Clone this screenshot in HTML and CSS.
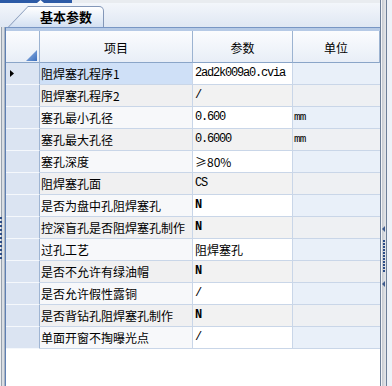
FILE: index.html
```html
<!DOCTYPE html>
<html lang="zh">
<head>
  <meta charset="UTF-8" />
  <title>基本参数</title>
  <link rel="stylesheet" href="styles.css">
</head>
<body>
  <div class="app">
    <div class="content">
      <div class="topband"><div class="topband-blue"><span class="notch"></span></div></div>
      <div class="tabbar">
        <div class="tab"><div class="tab-face">基本参数</div></div>
      </div>
      <div class="body">
        <div class="leftedge"><span class="grip"></span></div>
        <div class="gridarea">
          <div class="grid">
            <div class="hcell corner"><span class="corner-tri"></span></div>
            <div class="hcell">项目</div>
            <div class="hcell">参数</div>
            <div class="hcell">单位</div>

            <div class="rh"><span class="cur"></span></div>
            <div class="c name sel">阻焊塞孔程序1</div>
            <div class="c val">2ad2k009a0.cvia</div>
            <div class="c unit"></div>

            <div class="rh"></div>
            <div class="c name alt">阻焊塞孔程序2</div>
            <div class="c val alt">/</div>
            <div class="c unit alt"></div>

            <div class="rh"></div>
            <div class="c name">塞孔最小孔径</div>
            <div class="c val">0.600</div>
            <div class="c unit mono">mm</div>

            <div class="rh"></div>
            <div class="c name alt">塞孔最大孔径</div>
            <div class="c val alt">0.6000</div>
            <div class="c unit alt mono">mm</div>

            <div class="rh"></div>
            <div class="c name">塞孔深度</div>
            <div class="c val cjk">≥80%</div>
            <div class="c unit"></div>

            <div class="rh"></div>
            <div class="c name alt">阻焊塞孔面</div>
            <div class="c val alt">CS</div>
            <div class="c unit alt"></div>

            <div class="rh"></div>
            <div class="c name">是否为盘中孔阻焊塞孔</div>
            <div class="c val b">N</div>
            <div class="c unit"></div>

            <div class="rh"></div>
            <div class="c name alt">控深盲孔是否阻焊塞孔制作</div>
            <div class="c val alt b">N</div>
            <div class="c unit alt"></div>

            <div class="rh"></div>
            <div class="c name">过孔工艺</div>
            <div class="c val cjk">阻焊塞孔</div>
            <div class="c unit"></div>

            <div class="rh"></div>
            <div class="c name alt">是否不允许有绿油帽</div>
            <div class="c val alt b">N</div>
            <div class="c unit alt"></div>

            <div class="rh"></div>
            <div class="c name">是否允许假性露铜</div>
            <div class="c val">/</div>
            <div class="c unit"></div>

            <div class="rh"></div>
            <div class="c name alt">是否背钻孔阻焊塞孔制作</div>
            <div class="c val alt b">N</div>
            <div class="c unit alt"></div>

            <div class="rh"></div>
            <div class="c name">单面开窗不掏曝光点</div>
            <div class="c val">/</div>
            <div class="c unit"></div>
          </div>
        </div>
      </div>
    </div>
    <div class="splitter">
      <div class="split-bar">
        <span class="arrow"></span>
        <span class="dots"></span>
        <span class="arrow"></span>
      </div>
      <div class="split-side"></div>
    </div>
  </div>
</body>
</html>
```

FILE: styles.css
```css
body {
  margin: 0;
  padding: 0;
  background: #fff;
  font-family: "Noto Sans CJK SC", "Liberation Sans", sans-serif;
  font-size: 12px;
  color: #000;
  overflow: hidden;
}

.app {
  display: flex;
  width: 392px;
  height: 386px;
}

.content {
  width: 380px;
  display: flex;
  flex-direction: column;
}

/* top strip */
.topband {
  height: 3px;
  background: #e9ecf0;
  display: flex;
}

.topband-blue {
  width: 72px;
  background: #2c5aa6;
  display: flex;
  align-items: flex-end;
  padding-left: 37px;
  box-sizing: border-box;
}

.notch {
  width: 7px;
  height: 3px;
  background: #fff;
  clip-path: polygon(50% 0, 100% 100%, 0 100%);
}

/* tab strip */
.tabbar {
  height: 24px;
  box-sizing: border-box;
  padding: 3px 0 0 8px;
  background: linear-gradient(#f3f6fb, #dfe7f3);
}

.tab {
  width: 96px;
  height: 21px;
  box-sizing: border-box;
  padding: 1px 1px 0 1px;
  background: #8397b8;
  border-radius: 0 5px 0 0;
  clip-path: polygon(0 100%, 20px 0, 100% 0, 100% 100%);
}

.tab-face {
  height: 100%;
  background: linear-gradient(#ffffff, #d3e0f2);
  border-radius: 0 4px 0 0;
  clip-path: polygon(0 100%, 19px 0, 100% 0, 100% 100%);
  display: flex;
  align-items: center;
  justify-content: center;
  padding-left: 20px;
  box-sizing: border-box;
  font-weight: bold;
  font-size: 13px;
  line-height: 20px;
}

/* body */
.body {
  flex: 1;
  display: flex;
}

.leftedge {
  width: 5px;
  background: linear-gradient(to right, #eceef1 0 1px, #98a2ae 1px 2px, #dadee3 2px 4px, #aab4c1 4px 5px);
  display: flex;
  justify-content: flex-start;
  padding-top: 190px;
  box-sizing: border-box;
}

.grip {
  width: 2px;
  height: 44px;
  background: repeating-linear-gradient(#2c4c86 0 2px, transparent 2px 4px);
}

.gridarea {
  flex: 1;
  border-left: 1px solid #5f80b3;
  border-top: 1px solid #7896c4;
  padding-top: 3px;
  background: linear-gradient(#b6cae6 0 3px, #fff 3px);
}

.grid {
  display: grid;
  grid-template-columns: 34px 153px 100px 87px;
  grid-template-rows: 32px;
  grid-auto-rows: 22px;
}

.hcell {
  box-sizing: border-box;
  background: linear-gradient(#fbfcfe, #e8eef7);
  border-right: 1px solid #9cb3d1;
  border-bottom: 1px solid #8aa5c8;
  display: flex;
  align-items: center;
  justify-content: center;
  padding-top: 2px;
}

.corner {
  align-items: flex-end;
  justify-content: flex-end;
  padding: 0 2px 1px 0;
}

.corner-tri {
  width: 11px;
  height: 11px;
  background: linear-gradient(135deg, #9dbbe6, #3b6fbe);
  clip-path: polygon(100% 0, 100% 100%, 0 100%);
}

.rh {
  box-sizing: border-box;
  background: #dbe4f2;
  border-right: 1px solid #9fb5d3;
  border-bottom: 1px solid #f5f8fc;
  display: flex;
  align-items: center;
  padding-left: 4px;
}

.cur {
  width: 4px;
  height: 7px;
  background: #000;
  clip-path: polygon(0 0, 100% 50%, 0 100%);
}

.c {
  box-sizing: border-box;
  border-right: 1px solid #c9d6e8;
  border-bottom: 1px solid #c9d6e8;
  line-height: 21px;
  white-space: nowrap;
  overflow: hidden;
}

.name {
  padding-left: 1px;
  background: #f7f8fa;
}

.name.alt {
  background: #f0f0f1;
}

.name.sel {
  background: #cfe0f7;
}

.val {
  padding-left: 2px;
  background: #fff;
  font-family: "Liberation Mono", monospace;
  font-size: 12px;
  letter-spacing: -1.2px;
  color: #000;
}

.val.alt {
  background: #f2f2f2;
}

.val.cjk {
  font-family: "Noto Sans CJK SC", sans-serif;
  font-size: 12px;
  letter-spacing: 0;
}

.b {
  font-weight: bold;
}

.unit {
  padding-left: 1px;
  background: #e9f0f9;
  border-right: none;
}

.unit.alt {
  background: #eef0f3;
}

.mono {
  font-family: "Liberation Mono", monospace;
  font-size: 11px;
  letter-spacing: -0.8px;
  color: #000;
}

/* right splitter */
.splitter {
  width: 12px;
  display: flex;
}

.split-bar {
  width: 7px;
  box-sizing: border-box;
  border-left: 1px solid #6d7f98;
  border-right: 1px solid #6d7f98;
  background: linear-gradient(to right, #f4f5f7 0 1px, #c3c8cf 1px, #e2e4e7 4px);
  display: flex;
  flex-direction: column;
  align-items: center;
  padding-top: 226px;
  gap: 8px;
}

.arrow {
  width: 3px;
  height: 6px;
  background: #3d5a8c;
  clip-path: polygon(100% 0, 0 50%, 100% 100%);
}

.dots {
  width: 2px;
  height: 33px;
  background: repeating-linear-gradient(#2c4c86 0 2px, transparent 2px 3px);
}

.split-side {
  flex: 1;
  background: #eef2f8;
}
```
